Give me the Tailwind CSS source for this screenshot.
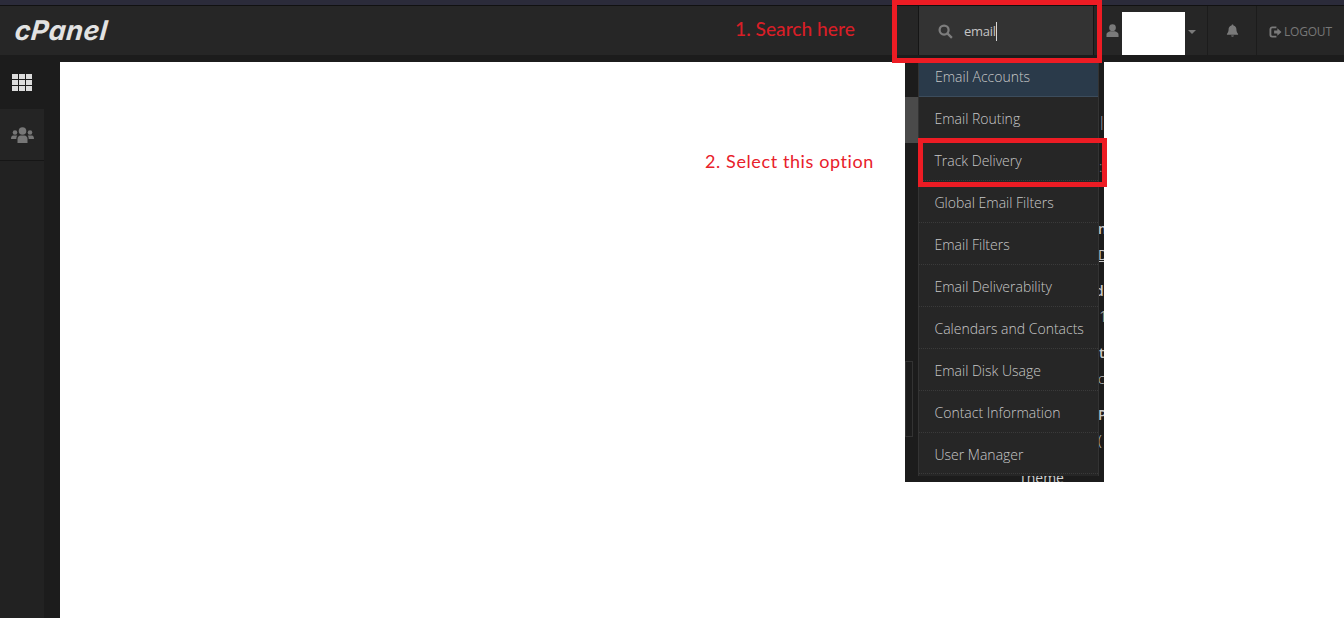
<!DOCTYPE html>
<html lang="en">
<head>
    <meta charset="UTF-8">
    <meta name="viewport" content="width=device-width,initial-scale=1.0">
    <title>cPanel - Track Delivery</title>
    <script src="https://cdn.jsdelivr.net/npm/@tailwindcss/browser@4"></script>
</head>
<body class="bg-white">
    <div class="relative flex h-[618px] w-[1344px] flex-col overflow-hidden font-['Open_Sans',sans-serif]">
        <!-- top strip -->
        <div class="h-[5px] bg-[#2b2b3a]"></div>
        <div class="h-px bg-[#111]"></div>

        <!-- header -->
        <header class="flex h-[49px] items-stretch bg-[#262626]">
            <div class="w-[735px] pl-[15px] pt-[10px]">
                <span class="block -skew-x-6 text-[27px] leading-[30px] font-bold tracking-[0.4px] text-[#e2e2e2] font-['Inter',sans-serif] italic">cPanel</span>
            </div>
            <div class="w-[157px] pt-[10px] font-['Lato',sans-serif] text-[19.2px] leading-[26px] font-medium text-[#d81e26]">1. Search here</div>
            <div class="w-[27px] border-r border-[#151515]"></div>
            <div class="flex w-[174px] items-center bg-[#333333] pl-[19px] pt-px">
                <svg class="h-[15px] w-[15px]" viewBox="0 0 16 16" fill="none" stroke="#7d7d7d" stroke-width="2.4">
                    <circle cx="6.5" cy="6.5" r="4.8"></circle>
                    <path d="M10 10l4.8 4.8"></path>
                </svg>
                <span class="ml-[11px] text-[13px] leading-[18px] tracking-[-0.3px] text-[#c4c4c4]">email</span>
                <span class="h-[19px] w-px bg-[#d8d8d8]"></span>
            </div>
            <div class="w-[13px] border-l border-[#151515]"></div>
            <div class="flex w-[16px] items-center">
                <svg class="h-[13px] w-[13px]" viewBox="0 0 14 14" fill="#7a7a7a">
                    <circle cx="7" cy="4" r="3.6"></circle>
                    <path d="M0.5 14v-2.5c0-2 2-3 4-3.6h5c2 .6 4 1.6 4 3.6V14z"></path>
                </svg>
            </div>
            <div class="w-[63px] pt-[6px]"><div class="h-[43px] bg-white"></div></div>
            <div class="flex w-[22px] items-center pl-[3px]">
                <div class="mt-[3px] h-0 w-0 border-x-[4px] border-t-[4px] border-x-transparent border-t-[#7a7a7a]"></div>
            </div>
            <div class="flex w-[49px] items-center justify-center border-l border-[#1c1c1c]">
                <svg class="h-[13px] w-[13px]" viewBox="0 0 14 14" fill="#7a7a7a">
                    <path d="M7 0.5c-.7 0-1 .5-1 1-2.2.5-3.2 2.2-3.2 4.2 0 2.6-.8 3.8-1.8 5v.8h12v-.8c-1-1.200-1.800-2.400-1.800-5 0-2-1-3.700-3.200-4.200 0-.5-.3-1-1-1z"></path>
                    <path d="M5.500 12.300h3c0 .8-.7 1.300-1.500 1.300s-1.500-.5-1.500-1.300z"></path>
                </svg>
            </div>
            <div class="flex flex-1 items-center border-l border-[#1c1c1c] pl-[12px] pt-[2px]">
                <svg class="h-[12px] w-[13px]" viewBox="0 0 14 13" fill="none" stroke="#7a7a7a">
                    <path d="M8 1.500H3.500a2 2 0 0 0-2 2v6a2 2 0 0 0 2 2H8" stroke-width="2"></path>
                    <path d="M5.500 5h3.500V2.500l4.500 4-4.500 4V8H5.500z" fill="#7a7a7a" stroke="none"></path>
                </svg>
                <span class="ml-[2px] text-[12px] leading-[16px] tracking-[-0.2px] text-[#777777]">LOGOUT</span>
            </div>
        </header>
        <div class="h-[7px] bg-[#1c1c1c]"></div>

        <!-- sidebar + content -->
        <div class="flex flex-1">
            <nav class="w-[60px] bg-[#1c1c1c]">
                <div class="flex h-[47px] w-[44px] items-center justify-center pb-[7px]">
                    <div class="grid grid-cols-3 gap-px">
                        <span class="h-[5px] w-[6px] bg-[#dcdcdc]"></span><span class="h-[5px] w-[6px] bg-[#dcdcdc]"></span><span class="h-[5px] w-[6px] bg-[#dcdcdc]"></span>
                        <span class="h-[5px] w-[6px] bg-[#dcdcdc]"></span><span class="h-[5px] w-[6px] bg-[#dcdcdc]"></span><span class="h-[5px] w-[6px] bg-[#dcdcdc]"></span>
                        <span class="h-[5px] w-[6px] bg-[#dcdcdc]"></span><span class="h-[5px] w-[6px] bg-[#dcdcdc]"></span><span class="h-[5px] w-[6px] bg-[#dcdcdc]"></span>
                    </div>
                </div>
                <div class="flex h-[52px] w-[44px] items-center justify-center border-b border-[#161616] bg-[#242424] pt-px">
                    <svg class="h-[17px] w-[23px]" viewBox="0 0 23 17" fill="#777777">
                        <circle cx="11.500" cy="4" r="3.800"></circle>
                        <circle cx="4" cy="5.500" r="2.300"></circle>
                        <circle cx="19" cy="5.500" r="2.300"></circle>
                        <path d="M6.500 16v-4c0-2 1.500-3.500 3-3.500h4c1.500 0 3 1.500 3 3.500v4z"></path>
                        <path d="M0 12c0-2 .8-3.500 2-3.500h4.300c-.6 1-1 2-1 3.500z"></path>
                        <path d="M23 12c0-2-.8-3.500-2-3.500h-4.300c.6 1 1 2 1 3.500z"></path>
                    </svg>
                </div>
                <div class="h-[457px] w-[44px] bg-[#222222]"></div>
            </nav>
            <main class="flex-1 bg-white"></main>
        </div>

        <!-- search results, over the page -->
        <div class="absolute left-[905px] top-[62px] flex h-[420px] w-[199px] overflow-hidden bg-[#1c1c1c]">
            <div class="w-[13px] pt-[35px]">
                <div class="h-[46px] bg-[#4a4a4a]"></div>
                <div class="mt-[218px] h-[76px] w-[8px] border border-[#333333]"></div>
            </div>
            <ul class="relative z-10 h-[414px] w-[181px] border-x border-[#333333] bg-[#262626] text-[14px] font-light text-[#c8c8c8]">
                <li class="flex h-[35px] items-center border-b border-[#3c4c5c] bg-[#2a3a4a] pl-[16px] pb-[5px]">Email Accounts</li>
                <li class="flex h-[42px] items-center border-b border-dotted border-[#3a3a3a] pl-[15.5px] pt-[2px]">Email Routing</li>
                <li class="flex h-[42px] items-center border-b border-dotted border-[#3a3a3a] pl-[15.5px] pt-[2px]">Track Delivery</li>
                <li class="flex h-[42px] items-center border-b border-dotted border-[#3a3a3a] pl-[15.5px] pt-[2px]">Global Email Filters</li>
                <li class="flex h-[42px] items-center border-b border-dotted border-[#3a3a3a] pl-[15.5px] pt-[2px]">Email Filters</li>
                <li class="flex h-[42px] items-center border-b border-dotted border-[#3a3a3a] pl-[15.5px] pt-[2px]">Email Deliverability</li>
                <li class="flex h-[42px] items-center border-b border-dotted border-[#3a3a3a] pl-[15.5px] pt-[2px]">Calendars and Contacts</li>
                <li class="flex h-[42px] items-center border-b border-dotted border-[#3a3a3a] pl-[15.5px] pt-[2px]">Email Disk Usage</li>
                <li class="flex h-[42px] items-center border-b border-dotted border-[#3a3a3a] pl-[15.5px] pt-[2px]">Contact Information</li>
                <li class="flex h-[41px] items-center border-b border-dotted border-[#3a3a3a] pl-[15.5px] pt-[2px]">User Manager</li>
            </ul>
            <!-- page text showing past the edge of the list -->
            <div class="relative w-[5px] overflow-hidden text-[14px] leading-[16px] font-semibold text-[#c8c8c8]">
                <span class="absolute left-[-1px] top-[52px] font-light">|</span>
                <span class="absolute left-[0px] top-[97px] font-light text-[#999999]">:</span>
                <span class="absolute left-[-1px] top-[159px]">m</span>
                <span class="absolute left-[-1px] top-[185px] font-normal underline">D</span>
                <span class="absolute left-[-4px] top-[221px]">d</span>
                <span class="absolute left-[-3px] top-[247px] font-light">.1</span>
                <span class="absolute left-[0px] top-[283px]">t</span>
                <span class="absolute left-[-1px] top-[309px] font-light">c</span>
                <span class="absolute left-[-1px] top-[345px]">P</span>
                <span class="absolute left-[-1px] top-[371px] font-light">(</span>
            </div>
            <div class="absolute left-[114px] top-[410px] text-[14px] leading-[12px] font-medium text-[#d0d0d0]">Theme</div>
        </div>

        <!-- annotations -->
        <div class="absolute left-[705px] top-[149px] font-['Lato',sans-serif] text-[18px] leading-[24px] tracking-[0.6px] text-[#e8202a]">2. Select this option</div>
        <div class="absolute left-[892px] top-0 z-20 h-[63px] w-[210px] border-[5px] border-[#ed1c24]"></div>
        <div class="absolute left-[918px] top-[138px] z-20 h-[49px] w-[189px] border-[5px] border-[#ed1c24]"></div>
    </div>
</body>
</html>
